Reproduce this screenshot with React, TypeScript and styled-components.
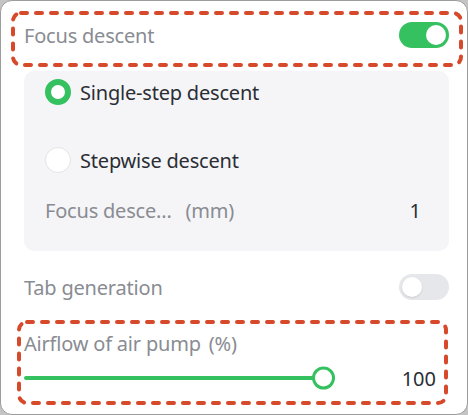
import React from "react";
import styled, { createGlobalStyle } from "styled-components";

const GlobalStyle = createGlobalStyle`
  html, body {
    margin: 0;
    padding: 0;
    background: #c4c4c4;
  }
  body {
    font-family: "Noto Sans", "Open Sans", sans-serif;
  }
`;

const Card = styled.div`
  box-sizing: border-box;
  width: 468px;
  height: 415px;
  background: #ffffff;
  border: 1px solid #9c9c9c;
  border-radius: 12px;
  padding: 9px 18px 0 23px;
  display: flex;
  flex-direction: column;
  overflow: hidden;
`;

const Highlighted = styled.div`
  position: relative;
`;

const DashedFrame = styled.svg<{ $top: number; $left: number; $right: number; $bottom: number }>`
  position: absolute;
  top: ${(p) => p.$top}px;
  left: ${(p) => p.$left}px;
  width: calc(100% - ${(p) => p.$left + p.$right}px);
  height: calc(100% - ${(p) => p.$top + p.$bottom}px);
  overflow: visible;
  pointer-events: none;
`;

const SettingRow = styled.div<{ $height: number }>`
  display: flex;
  align-items: center;
  justify-content: space-between;
  height: ${(p) => p.$height}px;
`;

const Label = styled.span`
  font-size: 20px;
  color: #898c92;
  letter-spacing: -0.2px;
  white-space: nowrap;
`;

const Unit = styled.span<{ $gap: number }>`
  margin-left: ${(p) => p.$gap}px;
`;

const Switch = styled.div<{ $on: boolean }>`
  box-sizing: border-box;
  width: 50px;
  height: 26px;
  border-radius: 13px;
  padding: 3px;
  display: flex;
  justify-content: ${(p) => (p.$on ? "flex-end" : "flex-start")};
  background: ${(p) => (p.$on ? "#35c15f" : "#e6e7eb")};
  &::after {
    content: "";
    width: 20px;
    height: 20px;
    border-radius: 50%;
    background: #ffffff;
    box-shadow: ${(p) => (p.$on ? "none" : "0 1px 2px rgba(0,0,0,0.12)")};
  }
`;

const SubPanel = styled.div`
  margin-top: 11px;
  background: #f5f5f8;
  border-radius: 10px;
  padding: 5px 28px 25px 21px;
  display: flex;
  flex-direction: column;
`;

const RadioRow = styled.div<{ $gapBefore: number }>`
  display: flex;
  align-items: center;
  gap: 9px;
  height: 32px;
  margin-top: ${(p) => p.$gapBefore}px;
`;

const RadioDot = styled.span<{ $checked: boolean }>`
  box-sizing: border-box;
  width: 26px;
  height: 26px;
  border-radius: 50%;
  background: #ffffff;
  border: ${(p) => (p.$checked ? "6px solid #35c15f" : "1px solid #e3e4e8")};
`;

const RadioText = styled.span`
  font-size: 20px;
  color: #2b2e34;
  letter-spacing: -0.2px;
`;

const ParamRow = styled.div`
  display: flex;
  align-items: center;
  justify-content: space-between;
  height: 32px;
  margin-top: 18px;
`;

const Value = styled.span`
  font-size: 20px;
  color: #2b2e34;
`;

const SliderBlock = styled.div`
  margin-top: 28px;
  padding-right: 13px;
  display: flex;
  flex-direction: column;
`;

const SliderRow = styled.div`
  display: flex;
  align-items: center;
  justify-content: space-between;
  height: 24px;
  margin-top: 10px;
`;

const Track = styled.div`
  position: relative;
  width: 311px;
  height: 4px;
  border-radius: 2px;
  background: #35c15f;
`;

const Thumb = styled.span`
  position: absolute;
  right: 0;
  top: 50%;
  transform: translateY(-50%);
  box-sizing: border-box;
  width: 23px;
  height: 23px;
  border-radius: 50%;
  background: #ffffff;
  border: 3px solid #35c15f;
`;

function Annotation(props: { top: number; left: number; right: number; bottom: number }) {
  return (
    <DashedFrame $top={props.top} $left={props.left} $right={props.right} $bottom={props.bottom}>
      <rect
        x="0"
        y="0"
        width="100%"
        height="100%"
        rx="8"
        fill="none"
        stroke="#d6492b"
        strokeWidth="4"
        strokeDasharray="6 9"
        strokeLinecap="round"
      />
    </DashedFrame>
  );
}

export default function App() {
  return (
    <>
      <GlobalStyle />
      <Card>
        <Highlighted>
          <SettingRow $height={50}>
            <Label>Focus descent</Label>
            <Switch $on={true} />
          </SettingRow>
          <Annotation top={3} left={-11} right={-12} bottom={-5} />
        </Highlighted>

        <SubPanel>
          <RadioRow $gapBefore={0}>
            <RadioDot $checked={true} />
            <RadioText>Single-step descent</RadioText>
          </RadioRow>
          <RadioRow $gapBefore={36}>
            <RadioDot $checked={false} />
            <RadioText>Stepwise descent</RadioText>
          </RadioRow>
          <ParamRow>
            <Label>
              Focus desce...<Unit $gap={14}>(mm)</Unit>
            </Label>
            <Value>1</Value>
          </ParamRow>
        </SubPanel>

        <SettingRow $height={30} style={{ marginTop: 21 }}>
          <Label>Tab generation</Label>
          <Switch $on={false} />
        </SettingRow>

        <Highlighted>
          <SliderBlock>
            <SettingRow $height={26}>
              <Label>
                Airflow of air pump<Unit $gap={8}>(%)</Unit>
              </Label>
            </SettingRow>
            <SliderRow>
              <Track>
                <Thumb />
              </Track>
              <Value>100</Value>
            </SliderRow>
          </SliderBlock>
          <Annotation top={20} left={-5} right={3} bottom={-13} />
        </Highlighted>
      </Card>
    </>
  );
}
